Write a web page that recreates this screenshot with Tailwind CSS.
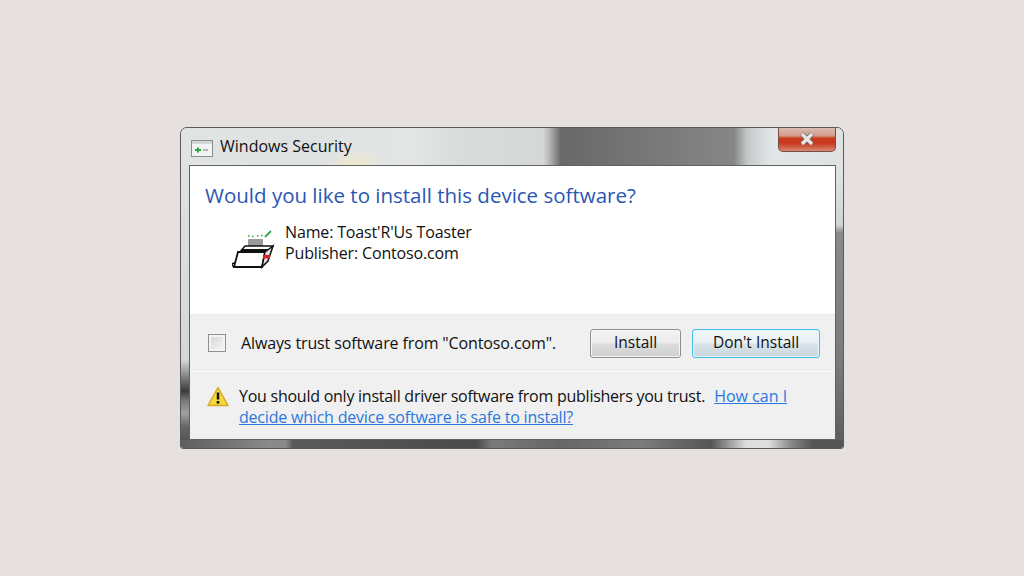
<!DOCTYPE html>
<html lang="en">
<head>
    <meta charset="UTF-8">
    <title>Windows Security</title>
    <script src="https://cdn.jsdelivr.net/npm/@tailwindcss/browser@4"></script>
</head>
<body class="bg-[#e6e1de] font-['Open_Sans','Noto_Sans',sans-serif] antialiased">

    <div class="w-[1024px] h-[576px] flex items-center justify-center">

        <!-- Window frame -->
        <div class="relative w-[664px] h-[322px] flex flex-col rounded-t-[7px] rounded-b-[3px] border border-[#5a5a5a] overflow-hidden">

            <!-- Title bar -->
            <div class="h-[37px] flex items-center pl-[10px] gap-[7px] shrink-0 bg-[radial-gradient(ellipse_28px_16px_at_175px_37px,#efe9c8,transparent),linear-gradient(90deg,#e2e4e4_0px,#dfe2e2_120px,#e4e6e6_230px,#d9dcdc_280px,#d6d8d8_362px,#b8b8b8_368px,#686868_380px,#7a7a7a_480px,#868686_553px,#c4c8c8_566px,#e3e6e6_590px,#dfe2e2_662px)]">
                <svg width="22" height="17" viewBox="0 0 22 17" class="mt-[4px] shrink-0">
                    <rect x="0.5" y="0.5" width="21" height="16" fill="#f2f3f3" stroke="#8b8f90"/>
                    <rect x="1" y="1" width="20" height="3" fill="#d3d7da"/>
                    <path d="M4 10h6M7 7.500v5" stroke="#2aa83c" stroke-width="2"/>
                    <path d="M12 10h5" stroke="#9aa0a3" stroke-width="1.500"/>
                </svg>
                <span class="text-[16px] leading-none text-[#111] mb-[2px]">Windows Security</span>
            </div>

            <!-- Close button -->
            <div class="absolute top-[-1px] right-[7px] w-[58px] h-[25px] rounded-b-[5px] border border-t-0 border-[#7a4a44] flex items-center justify-center bg-[linear-gradient(180deg,#d8c0b8_0%,#d49a88_36%,#c8391e_48%,#c8391e_68%,#d98a72_100%)]">
                <svg width="16" height="14" viewBox="0 0 16 14">
                    <path d="M3 2L13 12M13 2L3 12" stroke="#6a6a6a" stroke-width="5"/>
                    <path d="M3 2L13 12M13 2L3 12" stroke="#e8e6e3" stroke-width="3.200"/>
                </svg>
            </div>

            <!-- Sides and client area -->
            <div class="h-[275px] flex shrink-0">
                <div class="w-[8px] bg-[linear-gradient(180deg,#dfe2e2_0px,#d6d8d8_195px,#8a8a8a_210px,#3a3a3a_226px,#7a7a7a_236px,#a0a0a0_248px,#666_262px,#555_275px)]"></div>

                <div class="w-[647px] flex flex-col border border-[#5f6264] bg-white">

                    <!-- Heading and device -->
                    <div class="h-[148px] shrink-0 pl-[15px] pt-[15px]">
                        <h1 class="text-[20.500px] leading-[29px] font-normal text-[#2a56b4]">Would you like to install this device software?</h1>
                        <div class="flex mt-[12px] ml-[27px] gap-[9px]">
                            <svg width="44" height="42" viewBox="0 0 44 42" class="shrink-0 mt-[6px]">
                                <path d="M16 8h1.500M20 8.500h1.500M25 8h1.500M29 7.500h1.500" stroke="#3aa24a" stroke-width="1.500"/>
                                <path d="M33 9l6-6" stroke="#3aa24a" stroke-width="1.800"/>
                                <rect x="16" y="11" width="15" height="8" rx="1" fill="#9a9a9a"/>
                                <path d="M8 24l5-6h28l-3 6z" fill="#fff" stroke="#111" stroke-width="1.500"/>
                                <path d="M10 22h29" stroke="#111" stroke-width="2"/>
                                <path d="M6 24h27l-3 15H2z" fill="#fff" stroke="#111" stroke-width="1.800"/>
                                <path d="M33 24l8-6-5 15-6 6z" fill="#e4e4e4" stroke="#111" stroke-width="1.500"/>
                                <rect x="31" y="27" width="7" height="3.500" fill="#e01c24"/>
                                <path d="M3 35q-3 0-3 1.500t2 2" fill="none" stroke="#111" stroke-width="1.500"/>
                            </svg>
                            <div class="text-[16px] leading-[21px] text-[#111] tracking-[-0.15px]">
                                <div>Name: Toast'R'Us Toaster</div>
                                <div>Publisher: Contoso.com</div>
                            </div>
                        </div>
                    </div>

                    <!-- Trust row -->
                    <div class="h-[57px] shrink-0 flex items-center pl-[18px] pr-[15px] bg-[#f0f0f0] border-t border-[#e8e8e8]">
                        <div class="w-[18px] h-[18px] border border-[#8e8f8f] bg-[linear-gradient(135deg,#d6d6d6,#f6f6f6)] shadow-[inset_0_0_0_2px_#f4f4f4] shrink-0"></div>
                        <span class="ml-[15px] text-[16px] text-[#111] tracking-[-0.12px]">Always trust software from "Contoso.com".</span>
                        <button class="ml-auto w-[91px] h-[29px] rounded-[3px] border border-[#8e8f8f] text-[15.500px] text-[#111] shadow-[inset_0_0_0_1px_#f6f6f6] bg-[linear-gradient(180deg,#f2f2f2_0%,#ebebeb_48%,#dddddd_52%,#cfcfcf_100%)]">Install</button>
                        <button class="ml-[11px] w-[128px] h-[29px] rounded-[3px] border border-[#45bfe6] text-[15.500px] text-[#111] shadow-[inset_0_0_0_1px_#e4f6fc] bg-[linear-gradient(180deg,#f2f7f9_0%,#e8f0f3_48%,#d8e4e9_52%,#c8d6dc_100%)]">Don't Install</button>
                    </div>

                    <!-- Warning row -->
                    <div class="flex-1 flex pl-[17px] pt-[14px] bg-[#f0f0f0] border-t border-[#fafafa]">
                        <svg width="22" height="21" viewBox="0 0 22 21" class="shrink-0">
                            <path d="M11 1.500L21 19.500H1z" fill="#f7d83c" stroke="#d6a92a" stroke-width="1.500" stroke-linejoin="round"/>
                            <path d="M11 6.500v7" stroke="#111" stroke-width="2.500"/>
                            <rect x="9.700" y="15" width="2.600" height="2.600" fill="#111"/>
                        </svg>
                        <div class="ml-[10px] text-[16px] leading-[21px] tracking-[-0.25px] text-[#111]">
                            <div class="flex gap-[9px]">
                                <span>You should only install driver software from publishers you trust.</span>
                                <a class="text-[#2a78dc] underline tracking-normal">How can I</a>
                            </div>
                            <a class="block text-[#2a78dc] underline tracking-[-0.2px]">decide which device software is safe to install?</a>
                        </div>
                    </div>
                </div>

                <div class="w-[7px] bg-[linear-gradient(180deg,#e2e5e5_0px,#cfd3d3_60px,#8a8a8a_68px,#7a7a7a_200px,#5e5e5e_275px)]"></div>
            </div>

            <!-- Bottom edge of the frame -->
            <div class="flex-1 bg-[linear-gradient(90deg,#5e5e5e_0px,#8a8a8a_89px,#8a8a8a_105px,#5a5a5a_112px,#4a4a4a_295px,#7a7a7a_311px,#666_380px,#7c7c7c_460px,#555_530px,#dddddd_565px,#dddddd_588px,#888_610px,#555_632px,#555_662px)]"></div>
        </div>
    </div>

</body>
</html>
